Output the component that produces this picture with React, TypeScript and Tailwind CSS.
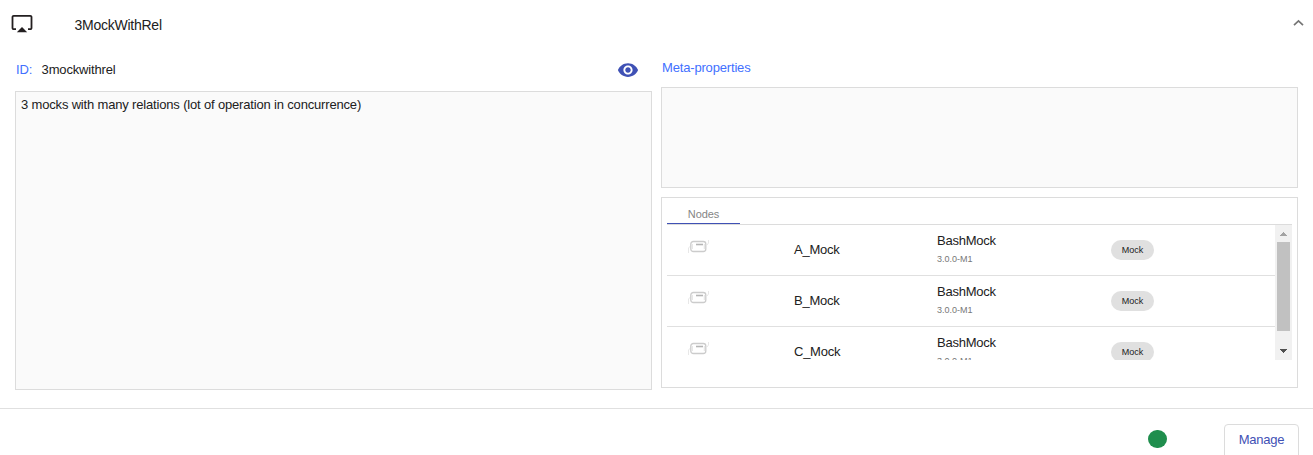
const nodes = ['A_Mock', 'B_Mock', 'C_Mock'];

function AirplayIcon() {
  return (
    <svg width="24" height="24" viewBox="0 0 24 24" fill="none" className="mb-[2px] shrink-0">
      <path d="M6 17.200H3.700A1.200 1.200 0 0 1 2.500 16V5a1.200 1.200 0 0 1 1.200-1.200h16.600A1.200 1.200 0 0 1 21.500 5v11a1.200 1.200 0 0 1-1.200 1.200H18" stroke="#231f20" strokeWidth="1.800" />
      <path d="M6.800 20.300 12 15l5.200 5.300z" fill="#231f20" />
    </svg>
  );
}

function EyeIcon() {
  return (
    <svg width="22" height="22" viewBox="0 0 24 24" className="shrink-0" fill="#3f51b5">
      <path d="M12 4.500C7 4.500 2.730 7.610 1 12c1.730 4.390 6 7.500 11 7.500s9.270-3.110 11-7.500c-1.730-4.390-6-7.500-11-7.500zM12 17c-2.760 0-5-2.240-5-5s2.240-5 5-5 5 2.240 5 5-2.240 5-5 5zm0-8c-1.660 0-3 1.340-3 3s1.340 3 3 3 3-1.340 3-3-1.340-3-3-3z" />
    </svg>
  );
}

function MockIcon() {
  return (
    <svg width="24" height="16" viewBox="0 0 24 16" fill="none" className="shrink-0">
      <path d="M1.500 14V9L4 6.500M20 6l1.500-2V1" stroke="#e8e8e8" />
      <rect x="3.800" y="2.500" width="15" height="10" rx="2.500" stroke="#cccccc" strokeWidth="1.300" />
      <path d="M9 5.500h7" stroke="#b5b5b5" strokeWidth="1.600" />
      <path d="M5.300 5v5M17.300 5v5" stroke="#e2e2e2" />
    </svg>
  );
}

function NodeRow({ name }: { name: string }) {
  return (
    <div className="flex h-[51px] shrink-0 border-b border-[#e0e0e0]">
      <div className="w-[127px] pt-[14px] pl-5">
        <MockIcon />
      </div>
      <div className="w-[143px] pt-[17px] text-[13px] leading-4 tracking-[-0.25px]">{name}</div>
      <div className="w-[174px] pt-2">
        <div className="text-[13px] leading-4 tracking-[-0.25px]">BashMock</div>
        <div className="mt-1 text-[9px] leading-3 tracking-normal text-[#777]">3.0.0-M1</div>
      </div>
      <div className="mt-[15px] flex h-5 w-[43px] items-center justify-center rounded-full bg-[#e0e0e0] pt-px text-[9px] tracking-normal">
        Mock
      </div>
    </div>
  );
}

function ScrollRail() {
  return (
    <div className="flex w-[17px] shrink-0 flex-col bg-[#f1f1f1]">
      <svg width="17" height="17" viewBox="0 0 17 17" fill="#a3a3a3" shapeRendering="crispEdges">
        <path d="M5 11h7v-1h-1V9h-1V8H9V7H8v1H7v1H6v1H5z" />
      </svg>
      <div className="mx-[2px] h-[89px] bg-[#c1c1c1]" />
      <div className="grow" />
      <svg width="17" height="17" viewBox="0 0 17 17" fill="#505050" shapeRendering="crispEdges">
        <path d="M5 6h7v1h-1v1h-1v1H9v1H8V9H7V8H6V7H5z" />
      </svg>
    </div>
  );
}

export default function App() {
  return (
    <div className="flex h-[455px] w-[1313px] flex-col overflow-hidden bg-white font-['Liberation_Sans',Arial,sans-serif] text-[13px] tracking-[-0.17px] text-[#212121]">
      <header className="flex h-[50px] shrink-0 items-center pr-[9px] pl-[10px]">
        <AirplayIcon />
        <h1 className="ml-[40.5px] grow text-[14px] tracking-[-0.25px]">3MockWithRel</h1>
        <svg width="12" height="8" viewBox="0 0 12 8" fill="none" className="mb-[5px]">
          <path d="M2 6.200 6.500 2 11 6.200" stroke="#757575" strokeWidth="1.700" />
        </svg>
      </header>

      <main className="flex h-[358px] shrink-0 gap-[9px] px-[15px]">
        <section className="flex w-[637px] flex-col">
          <div className="flex h-[41px] items-center pr-[13px] pb-[2px] pl-px">
            <span className="text-[#4270ff]">ID:</span>
            <span className="ml-[9.500px] grow">3mockwithrel</span>
            <EyeIcon />
          </div>
          <div className="h-[299px] border border-[#dcdcdc] bg-[#fafafa] px-[5px] pt-[5px] leading-4">
            3 mocks with many relations (lot of operation in concurrence)
          </div>
        </section>

        <section className="flex w-[637px] flex-col">
          <h2 className="h-[37px] pt-[10px] pl-px leading-4 text-[#4270ff]">Meta-properties</h2>
          <div className="h-[101px] border border-[#dcdcdc] bg-[#fafafa]" />
          <div className="mt-[9px] h-[191px] border border-[#dcdcdc] px-[5px]">
            <div className="flex h-[27px] border-b border-[#dcdcdc]">
              <div className="w-[73px] border-b border-[#3f51b5] pt-[9px] text-center text-[11px] leading-[14px] tracking-[-0.1px] text-[#858585]">
                Nodes
              </div>
            </div>
            <div className="flex h-[135px] overflow-hidden">
              <div className="flex grow flex-col overflow-hidden">
                {nodes.map((name) => (
                  <NodeRow key={name} name={name} />
                ))}
              </div>
              <ScrollRail />
            </div>
          </div>
        </section>
      </main>

      <footer className="flex h-[60px] shrink-0 justify-end border-t border-[#e0e0e0] pr-[14px]">
        <div className="mt-[20.500px] mr-[57px] h-[18.500px] w-[19px] rounded-full bg-[#1f8e4d]" />
        <button className="mt-[15px] h-9 w-[75px] rounded border border-[#dcdcdc] pb-[5px] text-[13px] tracking-[-0.25px] text-[#3f51b5]">
          Manage
        </button>
      </footer>
    </div>
  );
}
